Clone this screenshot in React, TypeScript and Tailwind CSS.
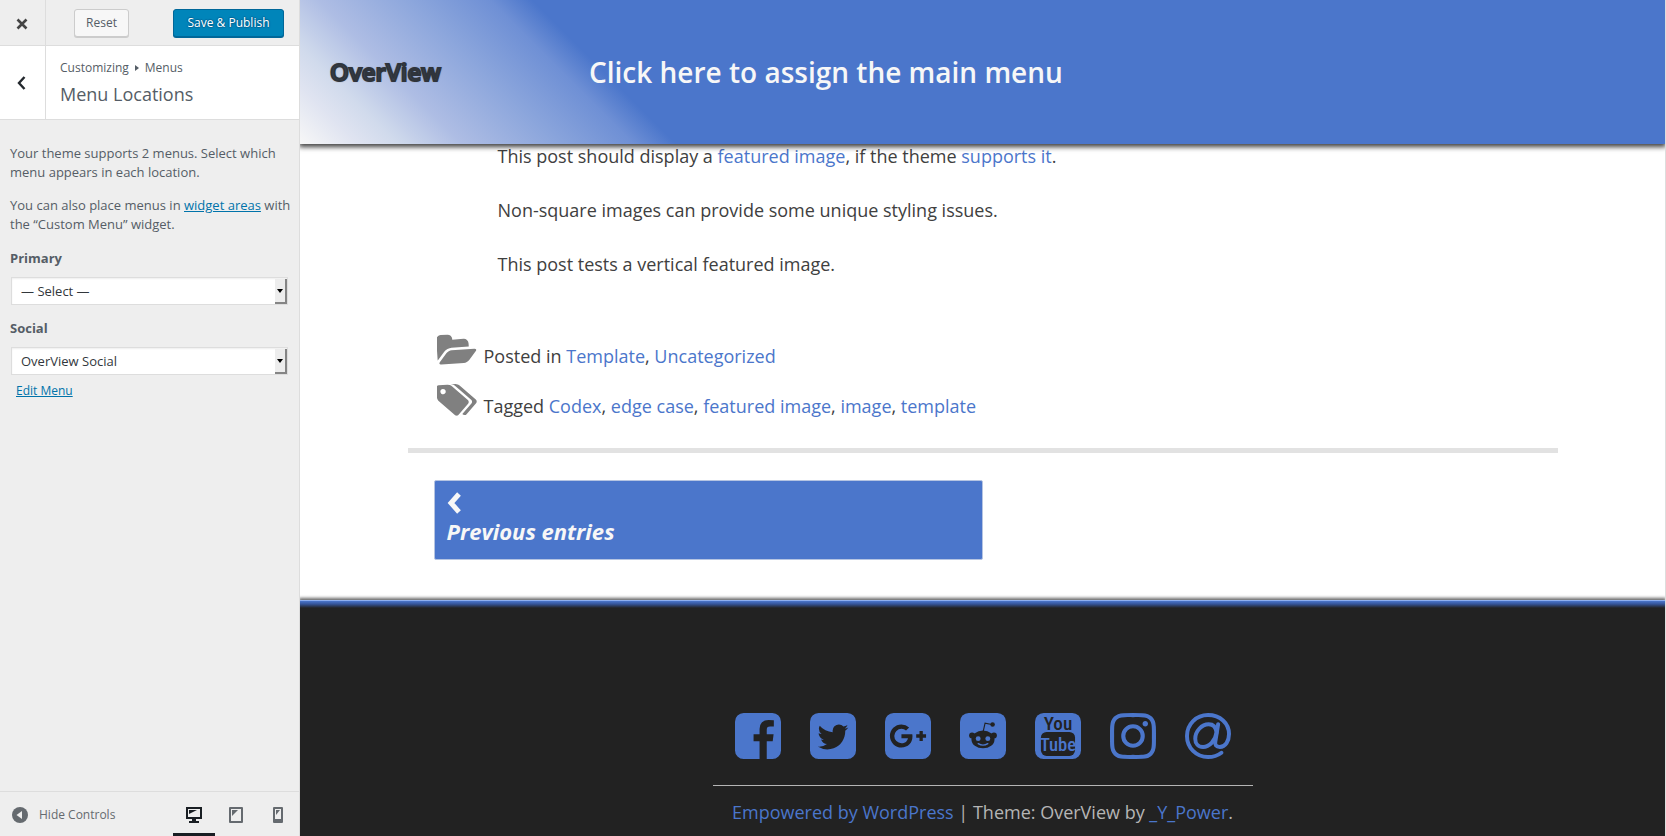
import React from 'react';

const socialLinks = [
  {
    name: 'Facebook',
    icon: (
      <path d="M1376 128q119 0 203.500 84.500t84.500 203.500v960q0 119-84.500 203.500t-203.500 84.500h-188v-595h199l30-232h-229v-148q0-56 23.500-84t91.500-28l122-1v-207q-63-9-178-9-136 0-217.500 80t-81.500 226v171h-200v232h200v595h-532q-119 0-203.500-84.500t-84.500-203.500v-960q0-119 84.500-203.500t203.500-84.500h960z" />
    ),
  },
  {
    name: 'Twitter',
    icon: (
      <path d="M1408 610q-56 25-121 34 68-40 93-117-65 38-134 51-61-66-153-66-87 0-148.500 61.500t-61.500 148.500q0 29 5 48-129-7-242-65t-192-155q-29 50-29 106 0 114 91 175-47-1-100-26v2q0 75 50 133.500t123 72.500q-29 8-51 8-13 0-39-4 21 63 74.500 104t121.500 42q-116 90-261 90-26 0-50-3 148 94 322 94 112 0 210-35.500t168-95 120.500-137 75-162 24.500-168.500q0-18-1-27 63-45 105-109zm256-194v960q0 119-84.500 203.500t-203.500 84.500h-960q-119 0-203.500-84.500t-84.500-203.500v-960q0-119 84.500-203.500t203.500-84.500h960q119 0 203.500 84.500t84.500 203.500z" />
    ),
  },
  {
    name: 'Google Plus',
    icon: (
      <path d="M1045 905q0-26-6-64h-362v132h217q-3 24-16.500 50t-37.500 53-66.500 44.500-96.500 17.500q-99 0-169-71t-70-171 70-171 169-71q92 0 153 59l104-101q-108-100-257-100-160 0-272 112.500t-112 271.500 112 271.500 272 112.500q165 0 266.500-105t101.500-270zm345 46h109v-110h-109v-110h-110v110h-110v110h110v110h110v-110zm274-535v960q0 119-84.500 203.500t-203.500 84.500h-960q-119 0-203.500-84.500t-84.500-203.500v-960q0-119 84.500-203.500t203.500-84.500h960q119 0 203.500 84.500t84.500 203.500z" />
    ),
  },
  {
    name: 'Reddit',
    icon: (
      <>
        <rect x="128" y="128" width="1536" height="1536" rx="288" />
        <g className="fill-[#222222]">
          <ellipse cx="896" cy="1010" rx="385" ry="295" />
          <circle cx="530" cy="880" r="98" />
          <circle cx="1262" cy="880" r="98" />
          <circle cx="1216" cy="512" r="76" />
        </g>
        <path d="M905 735l60-270 225 48" className="fill-none stroke-[#222222]" strokeWidth="38" />
        <circle cx="735" cy="985" r="82" />
        <circle cx="1057" cy="985" r="82" />
        <path d="M735 1150q161 105 322 0" className="fill-none stroke-[#4b76cb]" strokeWidth="44" strokeLinecap="round" />
      </>
    ),
  },
  {
    name: 'YouTube',
    icon: (
      <>
        <rect x="128" y="128" width="1536" height="1536" rx="288" />
        <rect x="325" y="760" width="1140" height="800" rx="190" className="fill-[#222222]" />
        <text x="896" y="705" textAnchor="middle" className="fill-[#222222] font-['Roboto_Condensed',sans-serif] text-[640px] font-medium">
          You
        </text>
        <text x="896" y="1400" textAnchor="middle" className="font-['Roboto_Condensed',sans-serif] text-[620px] font-medium">
          Tube
        </text>
      </>
    ),
  },
  {
    name: 'Instagram',
    icon: (
      <path d="M1152 896q0-106-75-181t-181-75-181 75-75 181 75 181 181 75 181-75 75-181zm138 0q0 164-115 279t-279 115-279-115-115-279 115-279 279-115 279 115 115 279zm108-410q0 38-27 65t-65 27-65-27-27-65 27-65 65-27 65 27 27 65zm-502-220q-7 0-76.500-.5t-105.500 0-96.500 3-103 10-71.500 18.500q-50 20-88 58t-58 88q-11 29-18.500 71.500t-10 103-3 96.500 0 105.500.5 76.500-.5 76.500 0 105.500 3 96.500 10 103 18.500 71.500q20 50 58 88t88 58q29 11 71.500 18.500t103 10 96.500 3 105.500 0 76.500-.5 76.500.5 105.500 0 96.500-3 103-10 71.500-18.500q50-20 88-58t58-88q11-29 18.500-71.500t10-103 3-96.500 0-105.500-.5-76.500.5-76.500 0-105.500-3-96.500-10-103-18.500-71.500q-20-50-58-88t-88-58q-29-11-71.500-18.500t-103-10-96.500-3-105.500 0-76.500.5zm768 630q0 229-5 317-10 208-124 322t-322 124q-88 5-317 5t-317-5q-208-10-322-124t-124-322q-5-88-5-317t5-317q10-208 124-322t322-124q88-5 317-5t317 5q208 10 322 124t124 322q5 88 5 317z" />
    ),
  },
  {
    name: 'Email',
    icon: (
      <g className="fill-none stroke-[#4b76cb]" strokeWidth="132" strokeLinecap="round" strokeLinejoin="round">
        <path d="M1345 1455C1220 1550 1070 1598 896 1598C500 1598 194 1290 194 896C194 502 500 194 896 194C1300 194 1598 470 1598 830C1598 1060 1480 1260 1290 1260C1170 1260 1120 1190 1140 1090L1235 500" />
        <path d="M1180 780C1160 610 1070 506 920 506C680 506 470 740 470 985C470 1150 570 1262 730 1262C940 1262 1140 1060 1180 780Z" />
      </g>
    ),
  },
];

const posts = ['Non-square images can provide some unique styling issues.', 'This post tests a vertical featured image.'];
const tags = ['Codex', 'edge case', 'featured image', 'image', 'template'];

const MenuSelect = ({ id, label, value }: { id: string; label: string; value: string }) => (
  <div>
    <label htmlFor={id} className="block font-bold leading-5">
      {label}
    </label>
    <div className="relative mt-[9px] ml-px w-[277px]">
      <select
        id={id}
        className="h-7 w-full appearance-none border border-[#dddddd] bg-white pt-0.5 pl-[9px] text-[13px] text-[#32373c] shadow-[inset_0_1px_2px_rgba(0,0,0,0.07)]"
      >
        <option>{value}</option>
      </select>
      <span className="pointer-events-none absolute top-0.5 right-px flex h-[25px] w-3 items-center justify-center border-r-2 border-b-2 border-[#858585] bg-[#ededed]">
        <svg viewBox="0 0 6 4" className="h-1 w-1.5 shrink-0">
          <path d="M0 0h6L3 4z" fill="#000" />
        </svg>
      </span>
    </div>
  </div>
);

const Sidebar = () => (
  <aside className="flex w-[300px] shrink-0 flex-col border-r border-[#dddddd] bg-[#eeeeee] text-[13px] text-[#555d66]">
    <div className="flex h-[46px] border-b border-[#dddddd]">
      <button aria-label="Close" className="flex w-[46px] items-center justify-center border-r border-[#dddddd]">
        <svg viewBox="0 0 12 12" className="mt-0.5 mr-0.5 h-3 w-3" stroke="#444" strokeWidth="2.600">
          <path d="M1.500 1.500l9 9M10.500 1.500l-9 9" />
        </svg>
      </button>
      <div className="flex flex-1 items-center justify-between pt-px pr-[15px] pl-7">
        <button className="h-7 w-[55px] rounded-[3px] border border-[#cccccc] bg-[#f7f7f7] text-xs shadow-[0_1px_0_#cccccc]">
          Reset
        </button>
        <button className="h-7 w-[111px] rounded-[3px] border border-[#006799] bg-[#0085ba] text-xs text-white shadow-[0_1px_0_#006799] [text-shadow:0_-1px_1px_#006799,1px_0_1px_#006799,0_1px_1px_#006799,-1px_0_1px_#006799]">
          Save &amp; Publish
        </button>
      </div>
    </div>

    <div className="flex h-[74px] border-b border-[#dddddd] bg-white">
      <button aria-label="Back" className="flex w-[46px] items-center justify-center border-r border-[#dddddd]">
        <svg viewBox="0 0 9 14" className="mr-0.5 h-[14px] w-[9px]" fill="none" stroke="#23282d" strokeWidth="2.400">
          <path d="M7.500 1L2 7l5.500 6" />
        </svg>
      </button>
      <div className="pt-3 pl-[14px]">
        <p className="flex items-center gap-1.5 text-xs leading-5">
          Customizing
          <svg viewBox="0 0 4 6" className="h-1.5 w-1">
            <path d="M0 0l4 3-4 3z" fill="#555d66" />
          </svg>
          Menus
        </p>
        <h3 className="text-lg leading-8">Menu Locations</h3>
      </div>
    </div>

    <div className="flex-1 pt-6 pl-2.5">
      <p className="leading-[19px]">
        Your theme supports 2 menus. Select which
        <br />
        menu appears in each location.
      </p>
      <p className="mt-3.5 mb-3.5 leading-[19px]">
        You can also place menus in{' '}
        <a href="#widgets" className="text-[#0073aa] underline">
          widget areas
        </a>{' '}
        with
        <br />
        the “Custom Menu” widget.
      </p>
      <MenuSelect id="primary" label="Primary" value="— Select —" />
      <div className="mt-[13px]">
        <MenuSelect id="social" label="Social" value="OverView Social" />
      </div>
      <a href="#edit" className="mt-1.5 ml-1.5 inline-block text-xs leading-5 text-[#0073aa] underline">
        Edit Menu
      </a>
    </div>

    <div className="flex h-[45px] border-t border-[#dddddd]">
      <button className="flex flex-1 items-center gap-[11px] pt-0.5 pl-3 text-xs text-[#656a6f]">
        <svg viewBox="0 0 16 16" className="h-4 w-4">
          <circle cx="8" cy="8" r="8" fill="#656a6f" />
          <path d="M10 4v8L4.500 8z" fill="#eee" />
        </svg>
        Hide Controls
      </button>
      <button aria-label="Desktop preview" className="flex w-[42px] items-center justify-center border-b-3 border-[#191e23] pt-1">
        <svg viewBox="0 0 16 16" className="h-4 w-4" fill="#191e23">
          <path fillRule="evenodd" d="M0 0h16v12h-6v2h3v2H3v-2h3v-2H0zM2 2v8h12V2z" />
          <path d="M3 3h8L3 7z" />
        </svg>
      </button>
      <button aria-label="Tablet preview" className="flex w-[42px] items-center justify-center pt-px">
        <svg viewBox="0 0 14 16" className="h-4 w-3.5" fill="#656a6f">
          <path fillRule="evenodd" d="M1 0h12q1 0 1 1v14q0 1-1 1H1q-1 0-1-1V1q0-1 1-1zM2 2v12h10V2z" />
          <path d="M3 3h6L3 9z" />
        </svg>
      </button>
      <button aria-label="Mobile preview" className="flex w-[42px] items-center justify-center pt-px">
        <svg viewBox="0 0 10 16" className="h-4 w-2.5" fill="#656a6f">
          <path fillRule="evenodd" d="M1 0h8q1 0 1 1v14q0 1-1 1H1q-1 0-1-1V1q0-1 1-1zM2 2v10h6V2z" />
          <path d="M3 3h4L3 8z" />
        </svg>
      </button>
    </div>
  </aside>
);

const Link = ({ children }: { children: React.ReactNode }) => (
  <a href="#link" className="text-[#4b76cb]">
    {children}
  </a>
);

const App = () => {
  return (
    <div className="flex min-h-screen bg-white font-['Open_Sans','Noto_Sans',sans-serif]">
      <Sidebar />

      <div className="flex min-w-0 flex-1 flex-col overflow-clip border-r border-[#dddddd] text-lg text-[#404040]">
        <header className="z-10 flex h-36 items-center bg-[linear-gradient(45deg,#f7f7f7_0px,#e0e4f1_40px,#d0daec_70px,#aebde4_115px,#8ca6dc_180px,#6f90d5_236px,#4b76cb_266px)] pl-[30px] shadow-[0_2px_5px_1px_rgba(0,0,0,0.75)]">
          <a
            href="#home"
            className="w-[259px] text-2xl font-semibold text-[#3a4250] [-webkit-text-stroke:2px_#2f343b] [text-shadow:0_0_2px_#333]"
          >
            OverView
          </a>
          <a href="#menu" className="pt-0.5 text-[28px] font-semibold text-[#f7f7f7]">
            Click here to assign the main menu
          </a>
        </header>

        <main className="mx-auto w-full max-w-[1150px]">
          <div className="pl-[90px] leading-6">
            <p>
              This post should display a <Link>featured image</Link>, if the theme <Link>supports it</Link>.
            </p>
            {posts.map((text) => (
              <p key={text} className="mt-[30px]">
                {text}
              </p>
            ))}
          </div>

          {/* Post meta */}
          <div className="mt-[56px] pl-[29px] leading-6">
            <p className="flex h-[50px] items-start">
              <svg viewBox="0 0 1920 1536" className="mt-0.5 h-8 w-10" fill="#808080">
                <path
                  transform="rotate(-4 960 768)"
                  d="M1879 824q0 31-31 66l-336 396q-43 51-120.500 86.500t-143.500 35.500h-1088q-34 0-60.500-13t-26.500-43q0-31 31-66l336-396q43-51 120.500-86.500t143.500-35.500h1088q34 0 60.500 13t26.500 43zm-343-344v160h-832q-94 0-197 47.500t-164 119.500l-337 396-5 6q0-4-.5-12.500t-.5-12.500v-960q0-92 66-158t158-66h320q92 0 158 66t66 158v32h544q92 0 158 66t66 158z"
                />
              </svg>
              <span className="mt-3 ml-[7px]">
                Posted in <Link>Template</Link>, <Link>Uncategorized</Link>
              </span>
            </p>
            <p className="flex h-[50px] items-start">
              <svg viewBox="0 0 1920 1536" className="mt-0.5 h-8 w-10" fill="#808080">
                <path
                  transform="rotate(-4 960 768) translate(0 -128)"
                  d="M448 448q0-53-37.500-90.500t-90.500-37.500-90.500 37.500-37.500 90.500 37.500 90.500 90.500 37.500 90.500-37.500 37.500-90.500zm1067 576q0 53-37 90l-491 492q-39 37-91 37-53 0-90-37l-715-716q-38-37-64.500-101t-26.500-117v-416q0-52 38-90t90-38h416q53 0 117 26.500t102 64.500l715 714q37 39 37 91zm384 0q0 53-37 90l-491 492q-39 37-91 37-36 0-59-14t-53-45l470-470q37-37 37-90 0-52-37-91l-715-714q-38-38-102-64.500t-117-26.500h224q53 0 117 26.500t102 64.500l715 714q37 39 37 91z"
                />
              </svg>
              <span className="mt-3 ml-[7px]">
                Tagged{' '}
                {tags.map((tag, i) => (
                  <React.Fragment key={tag}>
                    {i > 0 && ', '}
                    <Link>{tag}</Link>
                  </React.Fragment>
                ))}
              </span>
            </p>
          </div>

          <hr className="mt-4 border-t-5 border-[#e2e2e2]" />

          <nav className="mt-[27px] px-[26px]">
            <a
              href="#previous"
              className="block h-20 w-1/2 rounded-[2px] border border-[#b5c4e2] bg-[#4b76cb] px-3 pt-2.5 text-[22px] font-bold text-[#f7f7f7] italic"
            >
              <svg viewBox="0 0 14 22" className="h-6 w-3.5" fill="none" stroke="#f7f7f7" strokeWidth="5">
                <path d="M12 2L4 11l8 9" />
              </svg>
              <span className="block leading-8">Previous entries</span>
            </a>
          </nav>
        </main>

        <footer className="mt-10 flex flex-1 flex-col items-center border-t border-[#8fb0f0] bg-[linear-gradient(#4b76cb_0px,#35559a_3px,#222222_7px)] pt-28 text-[#b5b5b5] shadow-[0_-1px_3px_1px_rgba(0,0,0,0.6)]">
          <div className="flex gap-[29px]">
            {socialLinks.map((link) => (
              <a key={link.name} href="#social" aria-label={link.name}>
                <svg viewBox="128 128 1536 1536" className="h-[46px] w-[46px] fill-[#4b76cb]">
                  {link.icon}
                </svg>
              </a>
            ))}
          </div>
          <p className="mt-[26px] w-[540px] border-t border-[#b5b5b5] pt-3 text-center leading-7">
            <Link>Empowered by WordPress</Link> | Theme: OverView by <Link>_Y_Power</Link>.
          </p>
        </footer>
      </div>
    </div>
  );
};

export default App;
